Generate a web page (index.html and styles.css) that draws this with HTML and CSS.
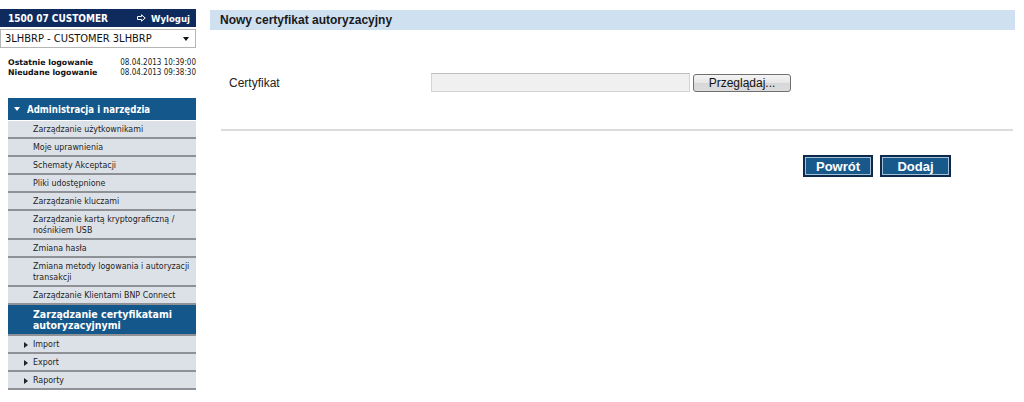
FILE: index.html
```html
<!DOCTYPE html>
<html lang="pl">
<head>
<meta charset="utf-8">
<title>Nowy certyfikat autoryzacyjny</title>
<link rel="stylesheet" href="styles.css">
</head>
<body>
<div class="page">
  <aside class="sidebar">
    <div class="userbar">
      <span class="user">1500 07 CUSTOMER</span>
      <a class="logout" href="#"><svg class="logout-icon" width="9" height="8" viewBox="0 0 9 8"><path d="M0.5 2.5 H4.5 V0.8 L8.2 4 L4.5 7.2 V5.5 H0.5 Z" fill="none" stroke="#ffffff" stroke-width="1"/></svg>Wyloguj</a>
    </div>
    <div class="select">
      <span class="select-text">3LHBRP - CUSTOMER 3LHBRP</span>
      <span class="caret"></span>
    </div>
    <div class="logins">
      <div class="login-row"><span class="login-lbl">Ostatnie logowanie</span><span class="login-dt">08.04.2013 10:39:00</span></div>
      <div class="login-row"><span class="login-lbl">Nieudane logowanie</span><span class="login-dt">08.04.2013 09:38:30</span></div>
    </div>
    <nav class="menu">
      <div class="menu-head"><span class="head-tri"></span>Administracja i narzędzia</div>
      <ul class="menu-list">
        <li class="item">Zarządzanie użytkownikami</li>
        <li class="item">Moje uprawnienia</li>
        <li class="item">Schematy Akceptacji</li>
        <li class="item">Pliki udostępnione</li>
        <li class="item">Zarządzanie kluczami</li>
        <li class="item">Zarządzanie kartą kryptograficzną / nośnikiem USB</li>
        <li class="item">Zmiana hasła</li>
        <li class="item">Zmiana metody logowania i autoryzacji transakcji</li>
        <li class="item">Zarządzanie Klientami BNP Connect</li>
        <li class="item active">Zarządzanie certyfikatami autoryzacyjnymi</li>
        <li class="item group"><span class="tri"></span>Import</li>
        <li class="item group"><span class="tri"></span>Export</li>
        <li class="item group"><span class="tri"></span>Raporty</li>
      </ul>
    </nav>
  </aside>
  <main class="main">
    <div class="title-bar">
      <h1 class="title">Nowy certyfikat autoryzacyjny</h1>
    </div>
    <div class="form-row">
      <label class="label">Certyfikat</label>
      <div class="file">
        <span class="file-input"></span>
        <button class="browse" type="button">Przeglądaj...</button>
      </div>
    </div>
    <div class="divider"></div>
    <div class="actions">
      <button class="btn" type="button">Powrót</button>
      <button class="btn" type="button">Dodaj</button>
    </div>
  </main>
</div>
</body>
</html>
```
FILE: styles.css
```css
* { box-sizing: border-box; }
html, body { margin: 0; padding: 0; background: #ffffff; }
body { font-family: "Liberation Sans", Arial, sans-serif; color: #1a1a1a; }

.page {
  display: flex;
  align-items: flex-start;
  gap: 14px;
  width: 1024px;
}

/* ---------- sidebar ---------- */
.sidebar {
  width: 196px;
  flex: none;
  padding-top: 9px;
  font-family: "DejaVu Sans Condensed", "DejaVu Sans", sans-serif;
}

.userbar {
  height: 18px;
  background: #0f2b5e;
  color: #ffffff;
  display: flex;
  align-items: center;
  justify-content: space-between;
  padding: 0 6px 0 8px;
  font-weight: bold;
  font-size: 10px;
}
.logout {
  color: #ffffff;
  text-decoration: none;
  display: flex;
  align-items: center;
  gap: 5px;
  font-size: 9.5px;
}
.logout-icon { display: block; }

.select {
  margin-top: 2px;
  height: 19px;
  border: 1px solid #b5b5b5;
  display: flex;
  align-items: center;
  justify-content: space-between;
  padding: 0 6px 0 4px;
  font-size: 11px;
  color: #111;
}
.caret {
  width: 0; height: 0;
  border-left: 3.5px solid transparent;
  border-right: 3.5px solid transparent;
  border-top: 4px solid #111;
}

.logins {
  margin-top: 10px;
  padding-left: 8px;
  font-size: 8px;
  line-height: 10px;
}
.login-row { display: flex; justify-content: space-between; align-items: baseline; }
.login-lbl { font-family: "DejaVu Sans", sans-serif; font-size: 7.8px; font-weight: bold; color: #111; }
.login-dt { color: #222; }

.menu { margin: 20px 0 0 8px; }
.menu-head {
  height: 23px;
  background: #14578b;
  color: #ffffff;
  font-weight: bold;
  font-size: 9.6px;
  display: flex;
  align-items: center;
  padding-left: 6px;
  gap: 7px;
  border-bottom: 1px solid #ffffff;
}
.head-tri {
  width: 0; height: 0;
  border-left: 3px solid transparent;
  border-right: 3px solid transparent;
  border-top: 4px solid #ffffff;
}

.menu-list { list-style: none; margin: 0; padding: 0; }
.item {
  background: #dce1e7;
  border-bottom: 2px solid #8e9196;
  padding: 3px 4px 2px 25px;
  font-size: 8.8px;
  line-height: 11px;
  color: #1c1c1c;
}
.item.active {
  background: #14578b;
  color: #ffffff;
  font-weight: bold;
  font-size: 10.5px;
  padding-top: 4px;
  padding-bottom: 3px;
}
.item.group {
  padding-left: 16px;
  display: flex;
  align-items: center;
  gap: 5px;
}
.tri {
  width: 0; height: 0;
  border-top: 3.5px solid transparent;
  border-bottom: 3.5px solid transparent;
  border-left: 4px solid #222;
}

/* ---------- main ---------- */
.main {
  width: 805px;
  flex: none;
  padding-top: 10px;
}
.title-bar {
  height: 20px;
  background: #cfe0f0;
  padding-left: 10px;
  display: flex;
  align-items: center;
}
.title {
  margin: 0;
  font-size: 12px;
  font-weight: bold;
  line-height: 14px;
  color: #1a1a1a;
}

.form-row {
  display: flex;
  align-items: center;
  margin-top: 43px;
  padding-left: 19px;
}
.label {
  width: 202px;
  font-size: 12px;
  color: #222;
}
.file { display: flex; align-items: center; gap: 3px; }
.file-input {
  display: block;
  width: 259px;
  height: 19px;
  background: #f0f0f0;
  border: 1px solid #d4d4d4;
  border-top-color: #bdbdbd;
}
.browse {
  width: 98px;
  height: 18px;
  padding: 0;
  border: 1px solid #707070;
  border-radius: 3px;
  background: linear-gradient(#f4f4f4, #e6e6e6 50%, #d7d7d7 51%, #dcdcdc);
  font-family: "Liberation Sans", Arial, sans-serif;
  font-size: 12px;
  color: #111;
}

.divider {
  margin: 37px 2px 0 11px;
  height: 2px;
  background: #dcdcdc;
}

.actions {
  display: flex;
  justify-content: flex-end;
  gap: 7px;
  margin-top: 24px;
  padding-right: 64px;
}
.btn {
  height: 22px;
  padding: 0;
  border: 2px solid #0c2a4c;
  box-shadow: inset 0 0 0 1px #a7c0d6;
  background: #18598c;
  color: #ffffff;
  font-family: "Liberation Sans", Arial, sans-serif;
  font-weight: bold;
  font-size: 13px;
}
.btn:first-child { width: 70px; }
.btn:last-child { width: 71px; }
```
